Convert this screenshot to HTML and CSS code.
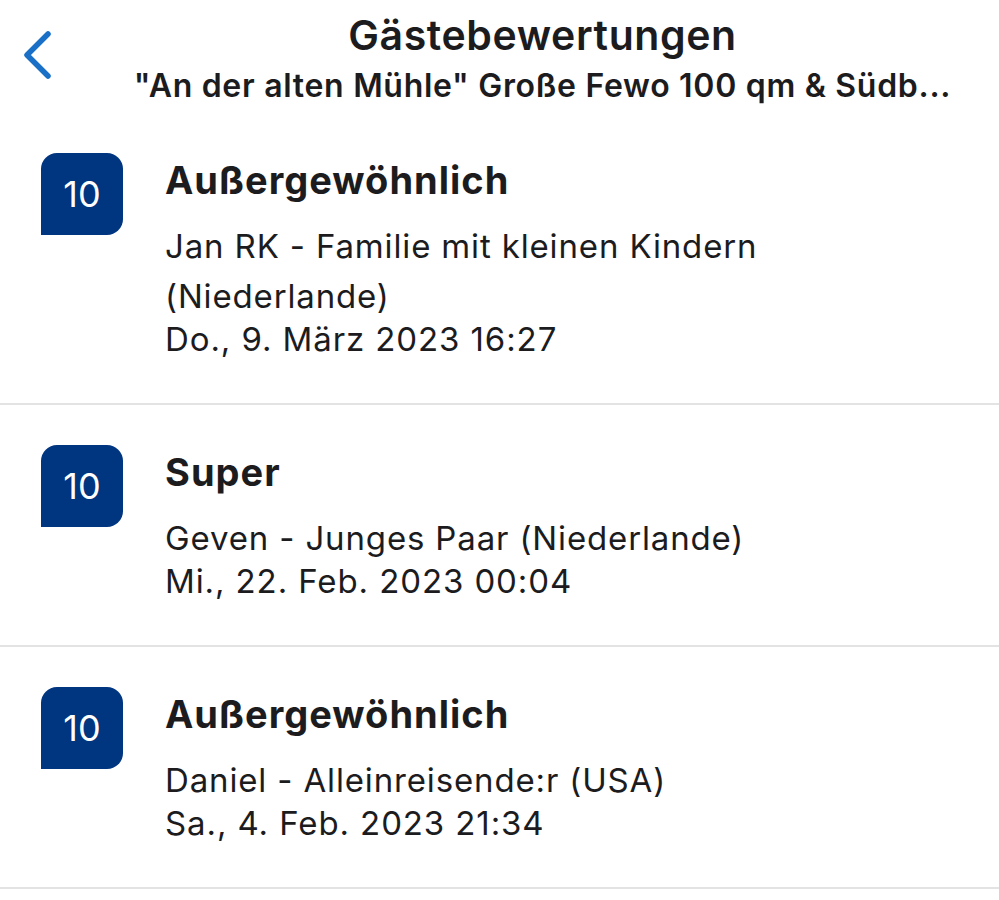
FILE: index.html
```html
<!DOCTYPE html>
<html lang="de">
<head>
    <meta charset="UTF-8">
    <meta name="viewport" content="width=device-width, initial-scale=1.0">
    <title>Gästebewertungen</title>
    <link rel="stylesheet" href="styles.css">
</head>
<body>
    <header class="top-bar">
        <a href="#" class="back-btn" aria-label="Zurück">
            <svg width="34" height="56" viewBox="0 0 34 56">
                <path d="M24 3 L3 24 L24 45" fill="none" stroke="#1a70c6" stroke-width="5.5" stroke-linecap="round" stroke-linejoin="round"/>
            </svg>
        </a>
        <div class="title-box">
            <h1>Gästebewertungen</h1>
            <p class="subtitle">"An der alten Mühle" Große Fewo 100 qm &amp; Südb...</p>
        </div>
    </header>

    <ul class="review-list">
        <li class="review">
            <div class="score">10</div>
            <div class="review-text">
                <h2>Außergewöhnlich</h2>
                <p class="guest">Jan RK - Familie mit kleinen Kindern (Niederlande)</p>
                <p class="date">Do., 9. März 2023 16:27</p>
            </div>
        </li>
        <li class="review">
            <div class="score">10</div>
            <div class="review-text">
                <h2>Super</h2>
                <p class="guest">Geven - Junges Paar (Niederlande)</p>
                <p class="date">Mi., 22. Feb. 2023 00:04</p>
            </div>
        </li>
        <li class="review">
            <div class="score">10</div>
            <div class="review-text">
                <h2>Außergewöhnlich</h2>
                <p class="guest">Daniel - Alleinreisende:r (USA)</p>
                <p class="date">Sa., 4. Feb. 2023 21:34</p>
            </div>
        </li>
    </ul>
</body>
</html>
```

FILE: styles.css
```css
body {
    font-family: Inter, "Noto Sans", sans-serif;
    background-color: #fff;
    color: #1c1c1e;
    margin: 0;
    padding: 0;
}

.top-bar {
    display: grid;
    grid-template-columns: 86px 1fr;
    height: 113px;
    padding-top: 12px;
    box-sizing: border-box;
}

.back-btn {
    display: block;
    padding: 19px 0 0 24px;
}

.title-box {
    text-align: center;
}

.top-bar h1 {
    font-size: 41px;
    font-weight: 600;
    letter-spacing: 0.6px;
    line-height: 46px;
    margin: 0;
}

.subtitle {
    font-size: 32px;
    font-weight: 600;
    letter-spacing: 0.7px;
    line-height: 46px;
    margin: 5px 0 0;
    white-space: nowrap;
}

.review-list {
    list-style: none;
    margin: 0;
    padding: 0;
}

.review {
    display: flex;
    gap: 42px;
    padding: 40px 40px 46px 41px;
    border-bottom: 2px solid #e3e3e3;
}

.score {
    flex: 0 0 82px;
    height: 82px;
    background-color: #003580;
    color: #fff;
    border-radius: 16px 16px 16px 0;
    display: flex;
    justify-content: center;
    align-items: center;
    font-size: 36px;
}

.review-text h2 {
    font-size: 38px;
    font-weight: 700;
    letter-spacing: 1px;
    line-height: 54px;
    margin: 0;
}

.guest {
    font-size: 33px;
    letter-spacing: 0.85px;
    line-height: 50px;
    margin: 14px 0 0;
}

.date {
    font-size: 33px;
    letter-spacing: 0.9px;
    line-height: 36px;
    margin: 0;
}
```
